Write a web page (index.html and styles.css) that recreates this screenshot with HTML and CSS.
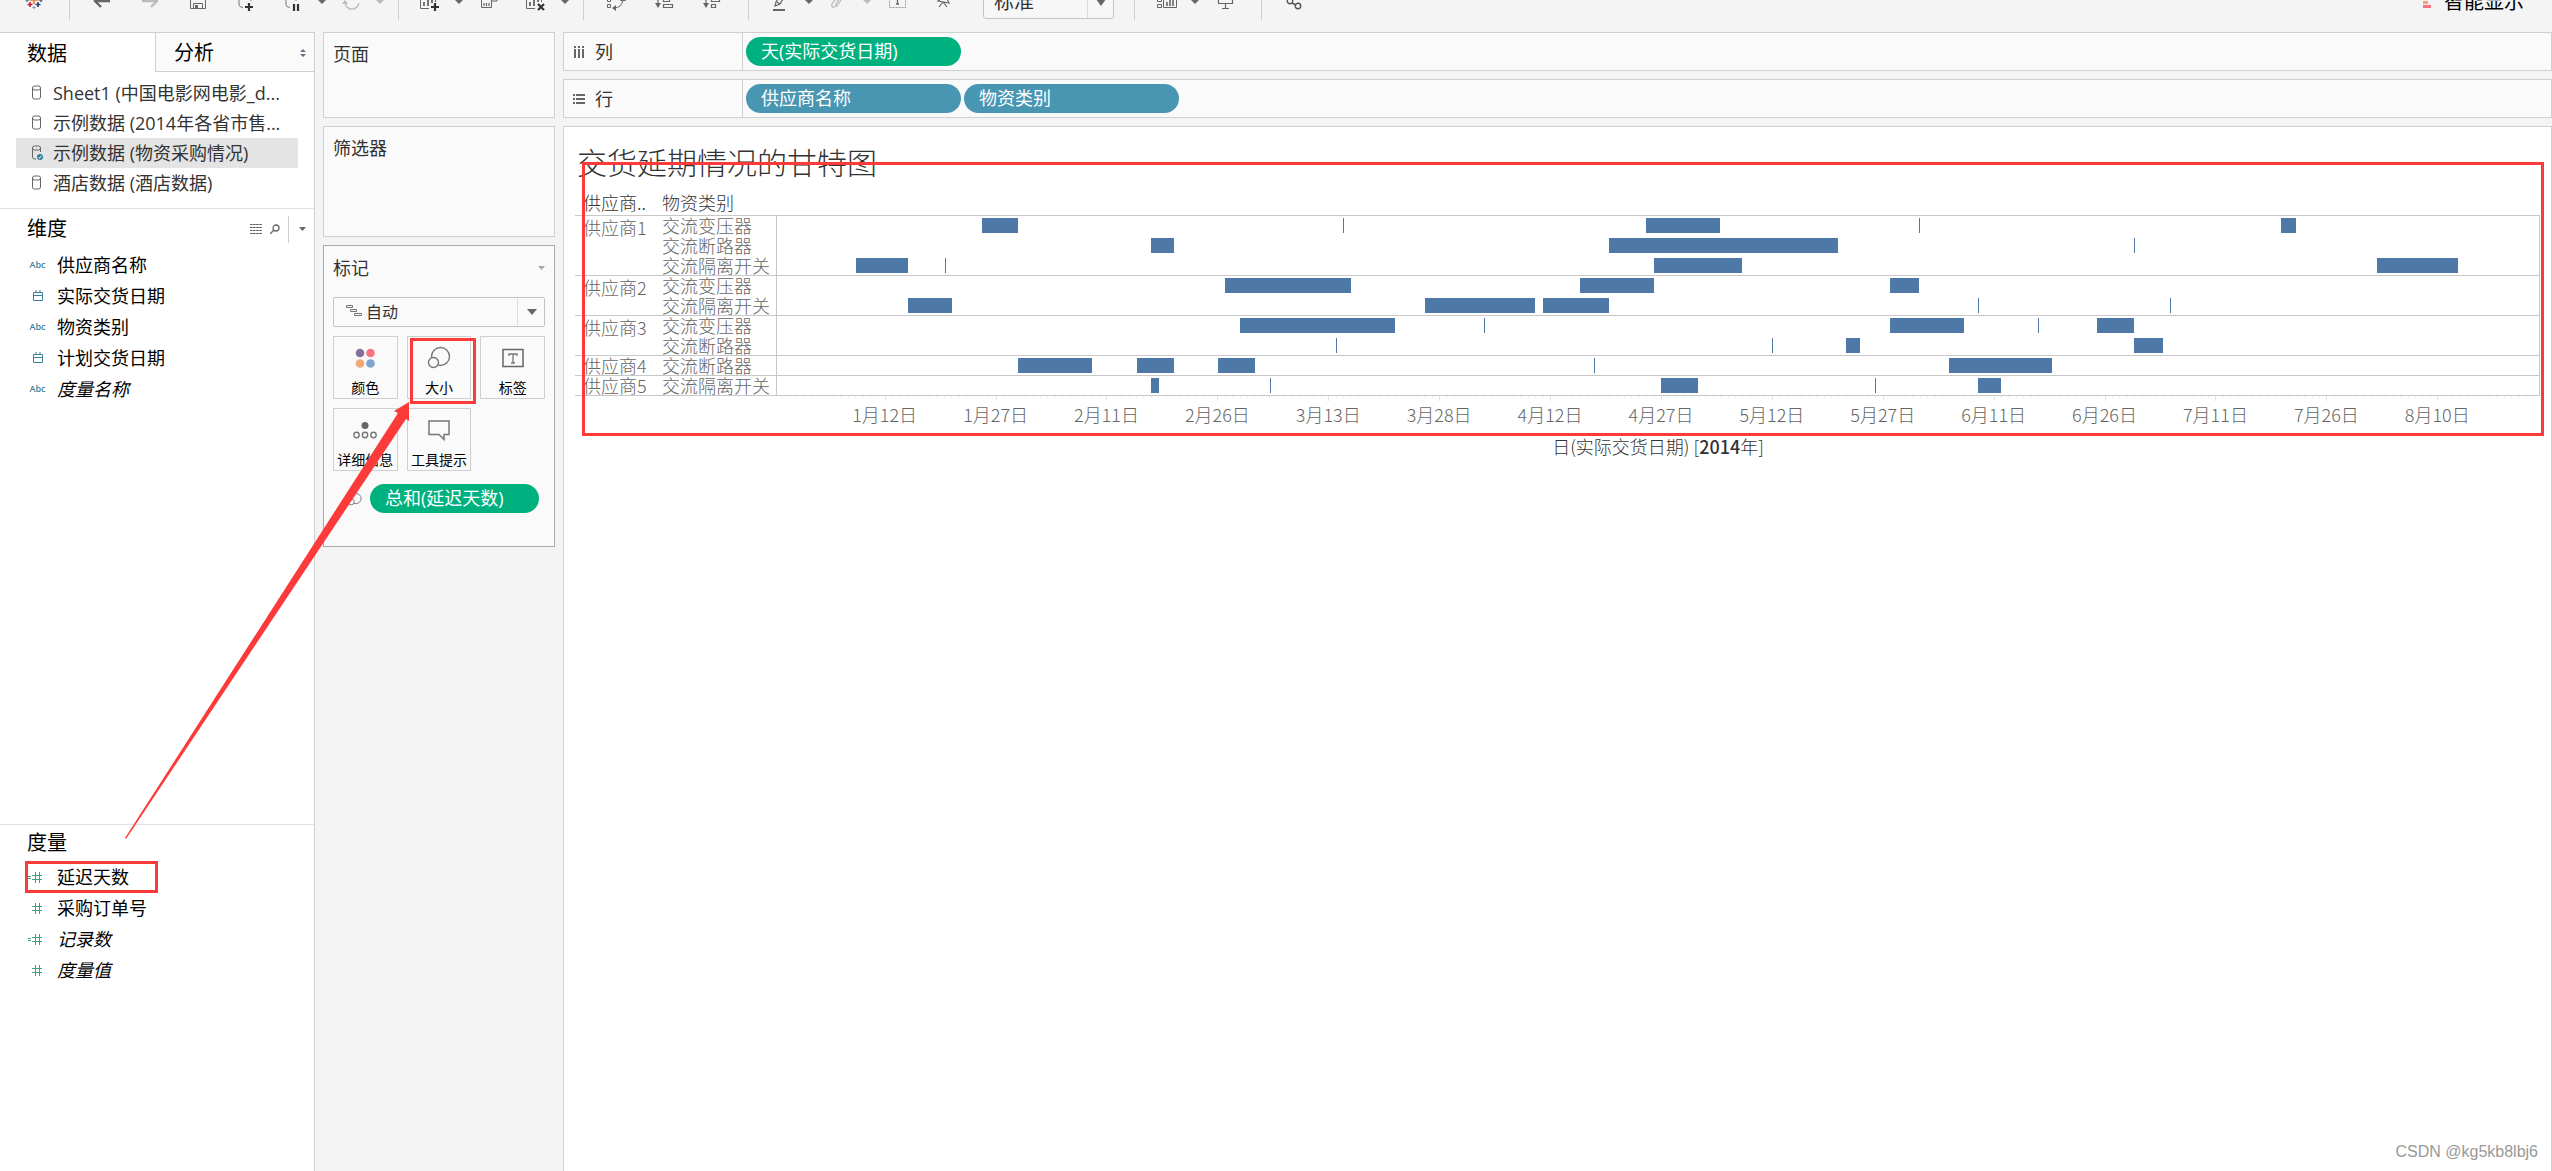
FILE: index.html
```html
<!DOCTYPE html>
<html lang="zh-CN">
<head>
<meta charset="utf-8">
<title>交货延期情况的甘特图</title>
<link rel="stylesheet" href="styles.css">
</head>
<body>
<header class="toolbar">
  <div class="toolbar-row">
    <div class="tool-group logo">
      <svg class="icon" viewBox="0 -10 24 24"><g fill="none" stroke-width="1.6"><path stroke="#eb7532" d="M12-5V4M7.500 0H16.500"/><path stroke="#c72035" d="M8 2V7M5.500 4.500H10.500"/><path stroke="#1f447e" d="M16 2V7M13.500 4.500H18.500"/><path stroke="#59879b" d="M5-2V2M3.500 0H7"/><path stroke="#5b6591" d="M19-2V2M17 0H20.500"/><path stroke="#7a8fc0" stroke-width="1" d="M12 6V9M10.500 7.500H13.500"/></g></svg>
    </div>
    <div class="tool-group">
      <button class="tool" aria-label="撤消"><svg class="icon" viewBox="0 -10 24 24"><path d="M20 1H6M11-5L5 1l6 6" fill="none" stroke="#666" stroke-width="2.400"/></svg></button>
      <button class="tool" aria-label="重做"><svg class="icon" viewBox="0 -10 24 24"><path d="M4 1H18M13-5l6 6-6 6" fill="none" stroke="#bbb" stroke-width="2.400"/></svg></button>
      <button class="tool" aria-label="保存"><svg class="icon" viewBox="0 -10 24 24"><path d="M4.500-6.500h15v15h-15zM7.500 8V3.500h9V8" fill="none" stroke="#666"/><path d="M9 5h3v3H9z" fill="#666"/></svg></button>
      <button class="tool" aria-label="新建数据源"><svg class="icon" viewBox="0 -10 24 24"><path d="M5-6V5q0 2 4 2.500M17-6V1" fill="none" stroke="#777"/><path d="M15 3v8M11 7h8" stroke="#333" stroke-width="2.200"/></svg></button>
      <button class="tool" aria-label="暂停自动更新"><svg class="icon" viewBox="0 -10 24 24"><path d="M4-6V5q0 2 4 2.500M14-6V1" fill="none" stroke="#777"/><path d="M12 4v7M16 4v7" stroke="#333" stroke-width="2.200"/></svg></button>
      <button class="drop" aria-label="更新选项"><svg viewBox="0 0 8 6"><path d="M0 1h8L4 5z" fill="#666"/></svg></button>
      <button class="tool" aria-label="刷新"><svg class="icon" viewBox="0 -10 24 24"><path d="M5 1a7 7 0 0 0 14 2M5 0a7 7 0 0 1 13-3" fill="none" stroke="#bbb" stroke-width="1.400"/><path d="M2 4l3-4 3 4z" fill="#bbb"/></svg></button>
      <button class="drop" aria-label="刷新选项"><svg viewBox="0 0 8 6"><path d="M0 1h8L4 5z" fill="#bbb"/></svg></button>
    </div>
    <div class="tool-group">
      <button class="tool" aria-label="新建工作表"><svg class="icon" viewBox="0 -10 24 24"><path d="M10 8.500H1.500v-15h15V2" fill="none" stroke="#666"/><path d="M5 2v4M9-2v8M13-4v7" stroke="#666" stroke-width="1.800"/><path d="M16 3v8M12 7h8" stroke="#333" stroke-width="2.200"/></svg></button>
      <button class="drop" aria-label="新建选项"><svg viewBox="0 0 8 6"><path d="M0 1h8L4 5z" fill="#666"/></svg></button>
      <button class="tool" aria-label="复制工作表"><svg class="icon" viewBox="0 -10 24 24"><path d="M4.500-1.500h10v9h-10zM8-2v-5h12v8h-5" fill="none" stroke="#666"/><path d="M7 3v3M9.500 3v3M12 3v3" stroke="#666" stroke-width="1.200"/></svg></button>
      <button class="tool" aria-label="清除工作表"><svg class="icon" viewBox="0 -10 24 24"><path d="M10 8.500H1.500v-15h15V2" fill="none" stroke="#666"/><path d="M5 2v4M9-2v8M13-4v6" stroke="#666" stroke-width="1.800"/><path d="M13 4l6 6M19 4l-6 6" stroke="#333" stroke-width="2.200"/></svg></button>
      <button class="drop" aria-label="清除选项"><svg viewBox="0 0 8 6"><path d="M0 1h8L4 5z" fill="#666"/></svg></button>
    </div>
    <div class="tool-group">
      <button class="tool" aria-label="交换行和列"><svg class="icon" viewBox="0 -10 24 24"><path d="M3.500-1.500h3v3h-3zM3.500 4.500h3v3h-3zM3.500-7.500h3v3h-3zM10 8q8 0 9-9" fill="none" stroke="#666"/><path d="M8 8l4-3v6zM16 1l3-4 3 4z" fill="#666"/></svg></button>
      <button class="tool" aria-label="升序排序"><svg class="icon" viewBox="0 -10 24 24"><path d="M6-7V5M11.500-2.500h6v4h-6zM11.500 4.500h9v3h-9z" fill="none" stroke="#666" stroke-width="1.200"/><path d="M3 3h6L6 8z" fill="#666"/></svg></button>
      <button class="tool" aria-label="降序排序"><svg class="icon" viewBox="0 -10 24 24"><path d="M6-7V5M11.500-2.500h8v4h-8zM11.500 4.500h4v3h-4z" fill="none" stroke="#666" stroke-width="1.200"/><path d="M3 3h6L6 8z" fill="#666"/></svg></button>
    </div>
    <div class="tool-group">
      <button class="tool" aria-label="突出显示"><svg class="icon" viewBox="0 -10 24 24"><path d="M6 6l1-4 6-10 4 2-6 10zM8 2l3 2" fill="none" stroke="#666" stroke-width="1.200"/><path d="M4 10h12" stroke="#666" stroke-width="2"/></svg></button>
      <button class="drop" aria-label="突出显示选项"><svg viewBox="0 0 8 6"><path d="M0 1h8L4 5z" fill="#666"/></svg></button>
      <button class="tool" aria-label="组成员"><svg class="icon" viewBox="0 -10 24 24"><path d="M15-6L9 4q-1 3 1 2l7-11M12-6L5 4q-1 4 3 3" fill="none" stroke="#bbb" stroke-width="1.300"/></svg></button>
      <button class="drop" aria-label="分组选项"><svg viewBox="0 0 8 6"><path d="M0 1h8L4 5z" fill="#bbb"/></svg></button>
      <button class="tool" aria-label="显示标记标签"><svg class="icon" viewBox="0 -10 24 24"><path d="M4.500-7.500h16v15h-16z" fill="none" stroke="#999" stroke-dasharray="2 1"/><path d="M9-4h7M12.500-4v8M11 4h3" fill="none" stroke="#666" stroke-width="1.300"/></svg></button>
      <button class="tool" aria-label="固定轴"><svg class="icon" viewBox="0 -10 24 24"><path d="M7-6l8 1M9-5l-1 4-3 2 11 2-2-4 1-4M6 7l4-5M10 2l4 5" fill="none" stroke="#666" stroke-width="1.200"/></svg></button>
      <div class="fit">
        <select class="fit-select" aria-label="适合"><option>标准</option></select>
        <svg class="fit-caret" viewBox="0 0 10 7"><path d="M0 0h10L5 7z" fill="#666"/></svg>
      </div>
    </div>
    <div class="tool-group">
      <button class="tool" aria-label="显示/隐藏卡"><svg class="icon" viewBox="0 -10 24 24"><path d="M2.500-1.500h4v3h-4zM2.500 4.500h4v3h-4zM8.500-7.500h13v15h-13z" fill="none" stroke="#666"/><path d="M12 2v4M15-1v7M18-3v9" stroke="#666" stroke-width="1.600"/></svg></button>
      <button class="drop" aria-label="卡选项"><svg viewBox="0 0 8 6"><path d="M0 1h8L4 5z" fill="#666"/></svg></button>
      <button class="tool" aria-label="演示模式"><svg class="icon" viewBox="0 -10 24 24"><path d="M5.500-7.500h14v11h-14zM12.500 4v4M9 8.500h7" fill="none" stroke="#666" stroke-width="1.200"/></svg></button>
    </div>
    <div class="tool-group">
      <button class="tool" aria-label="共享"><svg class="icon" viewBox="0 -10 24 24"><g fill="none" stroke="#555" stroke-width="1.400"><circle cx="8" cy="1" r="2.700"/><circle cx="16" cy="6" r="2.700"/><circle cx="16" cy="-5" r="2.700"/><path d="M10 3l4 2M10-1l4-3"/></g></svg></button>
    </div>
    <button class="show-me"><svg class="icon" viewBox="0 -10 24 24"><path d="M12 1h5v3h-5z" fill="#f1a778"/><path d="M12 5h8v3h-8z" fill="#f87382"/></svg>智能显示</button>
  </div>
</header>

<main class="workspace">
  <aside class="data-pane">
    <div class="tabs">
      <button class="tab tab-active">数据</button>
      <button class="tab">分析<svg class="updown" viewBox="0 0 6 8"><path d="M0 3l3-3 3 3zM0 5h6L3 8z" fill="#667080"/></svg></button>
    </div>
    <ul class="sources">
      <li class="source"><svg class="db" viewBox="0 0 12 16"><path d="M1.500 3v9q0 2 2 2h4q2 0 2-2V3q0-2-2-2h-4q-2 0-2 2q0 2 2 2h4q2 0 2-2" fill="none" stroke="#666"/></svg>Sheet1 (中国电影网电影_d...</li>
      <li class="source"><svg class="db" viewBox="0 0 12 16"><path d="M1.500 3v9q0 2 2 2h4q2 0 2-2V3q0-2-2-2h-4q-2 0-2 2q0 2 2 2h4q2 0 2-2" fill="none" stroke="#666"/></svg>示例数据 (2014年各省市售...</li>
      <li class="source source-active"><svg class="db" viewBox="0 0 12 16"><path d="M5 14H3.500q-2 0-2-2V3q0-2 2-2h4q2 0 2 2v4M1.500 3q0 2 2 2h4q2 0 2-2" fill="none" stroke="#666"/><circle cx="9" cy="12" r="3" fill="#2f7f9c"/><path d="M7.500 12l1 1.500 2-3" fill="none" stroke="#fff" stroke-width=".8"/></svg>示例数据 (物资采购情况)</li>
      <li class="source"><svg class="db" viewBox="0 0 12 16"><path d="M1.500 3v9q0 2 2 2h4q2 0 2-2V3q0-2-2-2h-4q-2 0-2 2q0 2 2 2h4q2 0 2-2" fill="none" stroke="#666"/></svg>酒店数据 (酒店数据)</li>
    </ul>
    <section class="fields">
      <div class="fields-head dims-head">
        <h2 class="heading">维度</h2>
        <button class="mini" aria-label="查看数据"><svg width="12" height="10" viewBox="0 0 12 10"><path d="M0 .5h12M0 3.500h12M0 6.500h12M0 9.500h12" stroke="#555" stroke-dasharray="2.500 .6"/></svg></button>
        <button class="mini" aria-label="查找字段"><svg width="10" height="10" viewBox="0 0 10 10"><circle cx="6" cy="4" r="3" fill="none" stroke="#666" stroke-width="1.300"/><path d="M4 6L0 10" stroke="#666" stroke-width="1.300"/></svg></button>
        <button class="mini mini-menu" aria-label="菜单"><svg width="7" height="4" viewBox="0 0 7 4"><path d="M0 0h7L3.500 4z" fill="#666"/></svg></button>
      </div>
      <ul class="field-list">
        <li class="field"><span class="abc">Abc</span>供应商名称</li>
        <li class="field"><span class="abc"><svg width="10" height="11" viewBox="0 0 10 11"><path d="M.5 2.500h9v8h-9zM.5 5.500h9M3 0v3M7 0v3" fill="none" stroke="#3d8097"/></svg></span>实际交货日期</li>
        <li class="field"><span class="abc">Abc</span>物资类别</li>
        <li class="field"><span class="abc"><svg width="10" height="11" viewBox="0 0 10 11"><path d="M.5 2.500h9v8h-9zM.5 5.500h9M3 0v3M7 0v3" fill="none" stroke="#3d8097"/></svg></span>计划交货日期</li>
        <li class="field field-italic"><span class="abc">Abc</span>度量名称</li>
      </ul>
    </section>
    <section class="fields">
      <div class="fields-head"><h2 class="heading">度量</h2></div>
      <ul class="field-list">
        <li class="field field-marked"><span class="abc"><svg width="20" height="12" viewBox="0 0 20 12"><path d="M0 5.500h3M0 7.500h3M4 4.500h10M4 8.500h10M7.500 1v11M11.500 1v11" stroke="#3fa37c"/></svg></span>延迟天数</li>
        <li class="field"><span class="abc"><svg width="20" height="12" viewBox="0 0 20 12"><path d="M4 4.500h10M4 8.500h10M7.500 1v11M11.500 1v11" stroke="#3fa37c"/></svg></span>采购订单号</li>
        <li class="field field-italic"><span class="abc"><svg width="20" height="12" viewBox="0 0 20 12"><path d="M0 5.500h3M0 7.500h3M4 4.500h10M4 8.500h10M7.500 1v11M11.500 1v11" stroke="#3fa37c"/></svg></span>记录数</li>
        <li class="field field-italic"><span class="abc"><svg width="20" height="12" viewBox="0 0 20 12"><path d="M4 4.500h10M4 8.500h10M7.500 1v11M11.500 1v11" stroke="#3fa37c"/></svg></span>度量值</li>
      </ul>
    </section>
  </aside>

  <div class="cards">
    <section class="card pages"><h3 class="card-title">页面</h3></section>
    <section class="card filters"><h3 class="card-title">筛选器</h3></section>
    <section class="card marks">
      <div class="marks-head"><h3 class="card-title">标记</h3><svg width="7" height="4" viewBox="0 0 7 4"><path d="M0 0h7L3.500 4z" fill="#aaa"/></svg></div>
      <div class="mark-type">
        <svg class="gantt-icon" viewBox="0 0 16 12"><path d="M.5 1.500h6v2h-6zM4.500 5.500h6v2h-6zM8.500 9.500h7v2h-7z" fill="none" stroke="#777"/></svg>
        <select class="mark-select" aria-label="标记类型"><option>自动</option></select>
        <svg class="mark-caret" viewBox="0 0 10 6"><path d="M0 0h10L5 6z" fill="#666"/></svg>
      </div>
      <div class="mark-grid">
        <button class="mark"><svg class="mark-icon" viewBox="0 0 24 24"><circle cx="7" cy="7" r="4.300" fill="#85709b"/><circle cx="17.500" cy="7" r="4.300" fill="#f87382"/><circle cx="7" cy="17.500" r="4.300" fill="#f1a778"/><circle cx="17.500" cy="17.500" r="4.300" fill="#7ea3cc"/></svg>颜色</button>
        <button class="mark mark-marked"><svg class="mark-icon" viewBox="0 0 24 24"><circle cx="13.500" cy="10.500" r="9" fill="none" stroke="#777" stroke-width="1.400"/><circle cx="6.500" cy="16.500" r="5" fill="#fafafa" stroke="#777" stroke-width="1.400"/></svg>大小</button>
        <button class="mark"><svg class="mark-icon" viewBox="0 0 24 24"><path d="M2 3.500h20v17H2z" fill="none" stroke="#666" stroke-width="1.500"/><path d="M8 10V8h8v2M12 8v9M10 17h4" fill="none" stroke="#777" stroke-width="1.300"/></svg>标签</button>
        <button class="mark"><svg class="mark-icon" viewBox="0 0 24 24"><circle cx="12" cy="7.500" r="3.500" fill="#666"/><g fill="none" stroke="#777" stroke-width="1.400"><circle cx="3.500" cy="17" r="2.700"/><circle cx="12" cy="17" r="2.700"/><circle cx="20.500" cy="17" r="2.700"/></g></svg>详细信息</button>
        <button class="mark"><svg class="mark-icon" viewBox="0 0 24 24"><path d="M2 3h20v13.500h-5v5l-5-5H2z" fill="none" stroke="#777" stroke-width="1.500"/></svg>工具提示</button>
      </div>
      <div class="encoding">
        <svg class="size-icon" viewBox="0 0 16 14"><circle cx="9.500" cy="6.500" r="5.500" fill="none" stroke="#777"/><circle cx="4.500" cy="10" r="3.200" fill="#fafafa" stroke="#777"/></svg>
        <span class="pill pill-green">总和(延迟天数)</span>
      </div>
    </section>
  </div>

  <div class="view">
    <div class="shelf">
      <div class="shelf-label"><svg class="shelf-icon" viewBox="0 0 12 12"><path d="M2 0v2M2 3v9M6 0v2M6 3v9M10 0v2M10 3v9" stroke="#666" stroke-width="2"/></svg>列</div>
      <span class="pill pill-green">天(实际交货日期)</span>
    </div>
    <div class="shelf">
      <div class="shelf-label"><svg class="shelf-icon" viewBox="0 0 12 12"><path d="M0 2h2M3 2h9M0 6h2M3 6h9M0 10h2M3 10h9" stroke="#666" stroke-width="2"/></svg>行</div>
      <span class="pill pill-blue">供应商名称</span>
      <span class="pill pill-blue">物资类别</span>
    </div>
    <section class="sheet">
      <h1 class="sheet-title">交货延期情况的甘特图</h1>
      <table class="gantt">
        <colgroup><col class="col-supplier"><col class="col-kind"><col></colgroup>
        <thead><tr><th>供应商..</th><th>物资类别</th><th></th></tr></thead>
        <tbody>
          <tr><th rowspan="3" class="last tall">供应商1</th><td>交流变压器</td><td class="plot" data-bars="13:5 62:0 103:10 140:0 189:2"></td></tr>
          <tr><td>交流断路器</td><td class="plot" data-bars="36:3 98:31 169:0"></td></tr>
          <tr><td class="last">交流隔离开关</td><td class="plot last" data-bars="-4:7 8:0 104:12 202:11"></td></tr>
          <tr><th rowspan="2" class="last tall">供应商2</th><td>交流变压器</td><td class="plot" data-bars="46:17 94:10 136:4"></td></tr>
          <tr><td class="last">交流隔离开关</td><td class="plot last" data-bars="3:6 73:15 89:9 148:0 174:0"></td></tr>
          <tr><th rowspan="2" class="last tall">供应商3</th><td>交流变压器</td><td class="plot" data-bars="48:21 81:0 136:10 156:0 164:5"></td></tr>
          <tr><td class="last">交流断路器</td><td class="plot last" data-bars="61:0 120:0 130:2 169:4"></td></tr>
          <tr><th class="last">供应商4</th><td class="last">交流断路器</td><td class="plot last" data-bars="18:10 34:5 45:5 96:0 144:14"></td></tr>
          <tr><th class="last">供应商5</th><td class="last">交流隔离开关</td><td class="plot last" data-bars="36:1 52:0 105:5 134:0 148:3"></td></tr>
        </tbody>
      </table>
      <div class="axis"></div>
      <p class="axis-title">日(实际交货日期) [<b>2014</b>年]</p>
      <div class="note-chart"></div>
    </section>
  </div>
</main>

<svg class="arrow" viewBox="0 0 420 850"><path d="M125 838L398 413 394 411 409 402 409 421 406 419 126 839z" fill="#fc3a39"/></svg>
<div class="watermark">CSDN @kg5kb8lbj6</div>
<script src="chart.js"></script>
</body>
</html>
```
FILE: chart.js
```js
// Days are counted from 12 January 2014.
const FIRST = -14.7, SPAN = 238.6;
const pct = day => ((day - FIRST) / SPAN * 100).toFixed(3) + '%';

document.querySelectorAll('.plot').forEach(cell => {
  cell.dataset.bars.split(' ').forEach(pair => {
    const [start, days] = pair.split(':').map(Number);
    const bar = document.createElement('span');
    bar.className = 'bar';
    bar.style.left = pct(start);
    bar.style.width = (days / SPAN * 100).toFixed(3) + '%';
    cell.append(bar);
  });
});

const axis = document.querySelector('.axis');
for (let d = -14; d < 224; d++) {
  const tick = document.createElement('i');
  tick.className = d % 15 === 0 && d >= 0 ? 'tick tick-major' : 'tick';
  tick.style.left = pct(d);
  axis.append(tick);
}
for (let d = 0; d <= 210; d += 15) {
  const date = new Date(2014, 0, 12 + d);
  const label = document.createElement('span');
  label.className = 'tick-label';
  label.style.left = pct(d);
  label.textContent = `${date.getMonth() + 1}月${date.getDate()}日`;
  axis.append(label);
}
```
FILE: styles.css
```css
*, *::after { box-sizing: border-box; margin: 0; padding: 0; }

body {
  display: flex;
  flex-direction: column;
  min-height: 100vh;
  position: relative;
  overflow: hidden;
  background: #f4f4f4;
  color: #333;
  font: 400 18px/24px "Open Sans", "Noto Sans CJK SC", sans-serif;
}
button, select { font: inherit; color: inherit; background: none; border: 0; }
ul { list-style: none; }
h1, h2, h3, th { font-weight: inherit; text-align: left; }

/* toolbar: upper half is scrolled out of the window */
.toolbar { height: 32px; overflow: hidden; }
.toolbar-row { display: flex; height: 36px; margin-top: -16px; }
.tool-group { display: flex; align-items: center; padding: 0 12px 0 8px; border-right: 1px solid #cfcfcf; }
.tool-group:nth-of-type(7) { border-right: 0; }
.logo { width: 70px; padding-left: 22px; }
.tool { display: flex; justify-content: center; width: 48px; }
.icon { width: 24px; height: 24px; }
.drop { display: flex; width: 10px; }
.drop svg { width: 8px; height: 6px; }
.fit { display: flex; align-items: center; position: relative; align-self: stretch; margin: 0 8px 0 14px; }
.fit-select { width: 131px; height: 34px; padding-left: 10px; font-size: 20px; appearance: none; border: 1px solid #c4c4c4; border-radius: 3px; background: linear-gradient(90deg, transparent 103px, #ddd 103px, #ddd 104px, transparent 104px) #f7f7f7; }
.fit-caret { position: absolute; right: 8px; width: 10px; height: 7px; }
.show-me { display: flex; align-items: center; gap: 9px; margin-left: auto; padding-right: 28px; font-size: 20px; color: #000; }

.workspace { flex: 1; display: flex; gap: 8px; }

/* data pane */
.data-pane { width: 315px; display: grid; grid-template-rows: auto auto 23fr 13fr; background: #fff; border: solid #cfcfcf; border-width: 1px 1px 0 0; color: #000; }
.tabs { display: flex; height: 39px; }
.tab { display: flex; align-items: center; justify-content: space-between; flex: 1; padding: 2px 8px 0 18px; font-size: 20px; background: #fafafa; border: solid #cfcfcf; border-width: 0 0 1px 1px; }
.tab-active { flex: 0 0 155px; padding-left: 27px; background: #fff; border: 0; }
.updown { width: 6px; height: 8px; }
.sources { padding: 6px 16px 10px; border-bottom: 1px solid #e2e2e2; color: #333; }
.source { display: flex; align-items: center; gap: 10px; height: 30px; padding-left: 15px; white-space: nowrap; }
.source-active { background: #e4e4e4; }
.db { width: 12px; height: 16px; }
.fields + .fields { border-top: 1px solid #e2e2e2; }
.fields-head { display: flex; align-items: center; height: 37px; padding-left: 27px; }
.dims-head { height: 40px; }
.heading { flex: 1; font-size: 20px; }
.mini { display: flex; align-items: center; height: 27px; margin-right: 8px; }
.mini-menu { margin-right: 0; padding: 0 8px 0 10px; border-left: 1px solid #cfcfcf; }
.field { display: flex; align-items: center; height: 31px; padding-left: 26px; position: relative; }
.field-italic { font-style: italic; }
.abc { display: flex; justify-content: center; width: 23px; margin-right: 8px; font: 600 9px/12px "Open Sans", sans-serif; color: #3d8097; }

/* cards */
.cards { width: 232px; display: flex; flex-direction: column; gap: 8px; }
.card { background: #fafafa; border: 1px solid #cfcfcf; padding: 9px; }
.card-title { font-size: 18px; line-height: 24px; }
.pages { height: 86px; }
.filters { height: 111px; }
.marks { height: 302px; padding-top: 10px; border-color: #aaa; display: flex; flex-direction: column; gap: 9px; }
.marks-head { display: flex; align-items: center; justify-content: space-between; height: 32px; padding-bottom: 8px; }
.mark-type { display: flex; align-items: center; position: relative; height: 30px; }
.mark-select { width: 100%; height: 30px; padding-left: 32px; font-size: 16px; appearance: none; border: 1px solid #c4c4c4; border-radius: 2px; background: linear-gradient(270deg, transparent 26px, #ddd 26px, #ddd 27px, transparent 27px); }
.gantt-icon { position: absolute; left: 13px; top: 7px; width: 16px; height: 12px; }
.mark-caret { position: absolute; right: 8px; width: 10px; height: 6px; }
.mark-grid { display: grid; grid-template-columns: repeat(3, 1fr); gap: 9px; }
.mark { display: flex; flex-direction: column; align-items: center; justify-content: space-between; height: 63px; padding: 9px 0 0; font-size: 14px; line-height: 20px; color: #000; white-space: nowrap; border: 1px solid #cfcfcf; position: relative; }
.mark-icon { width: 24px; height: 24px; }
.encoding { display: flex; align-items: center; gap: 8px; margin-top: 4px; padding-left: 14px; }
.size-icon { width: 15px; height: 14px; }

.pill { width: 215px; height: 29px; padding-left: 15px; border-radius: 15px; color: #fff; line-height: 29px; white-space: nowrap; }
.encoding .pill { width: 169px; }
.pill-green { background: #00b180; }
.pill-blue { background: #4996b2; }

/* view */
.view { flex: 1; min-width: 0; display: flex; flex-direction: column; gap: 8px; }
.shelf { display: flex; align-items: center; gap: 3px; height: 39px; background: #fafafa; border: 1px solid #cfcfcf; }
.shelf-label { display: flex; align-items: center; align-self: stretch; gap: 10px; width: 179px; padding-left: 9px; border-right: 1px solid #cfcfcf; }
.shelf-icon { width: 12px; height: 12px; }
.sheet { flex: 1; position: relative; padding: 14px 11px 0; background: #fff; border: 1px solid #cfcfcf; border-bottom: 0; font-family: "Noto Sans CJK SC", sans-serif; font-weight: 300; }
.sheet-title { padding-left: 2px; margin-bottom: 8px; font-size: 30px; line-height: 40px; }

.gantt { width: 100%; table-layout: fixed; border-collapse: separate; border-spacing: 0; color: #666; line-height: 18px; }
.col-supplier { width: 87px; }
.col-kind { width: 114px; }
.gantt th { padding-left: 8px; vertical-align: top; white-space: nowrap; }
.gantt thead th { height: 27px; padding-top: 2px; line-height: 22px; color: #333; border-bottom: 1px solid #c8c8c8; }
.gantt thead th + th { padding-left: 0; }
.gantt tbody th, .gantt tbody td { height: 20px; white-space: nowrap; vertical-align: top; }
.gantt tbody .tall { padding-top: 2px; }
.gantt tbody .last { border-bottom: 1px solid #c8c8c8; }
.gantt tbody .plot { position: relative; border-left: 1px solid #c8c8c8; border-right: 1px solid #c8c8c8; }
.bar { position: absolute; top: 2px; height: 15px; min-width: 1px; background: #4e79a7; }

.axis { position: relative; height: 36px; margin-left: 201px; color: #666; }
.tick { position: absolute; top: 0; width: 1px; height: 2px; background: #ececec; }
.tick-major { height: 5px; background: #e4e4e4; }
.tick-label { position: absolute; top: 6px; transform: translateX(-50%); white-space: nowrap; }
.axis-title { margin-left: 201px; text-align: center; line-height: 28px; }
.axis-title b { font-weight: 500; }

/* annotations */
.note-chart, .field-marked::after, .mark-marked::after { position: absolute; border: 3px solid #fc3a39; pointer-events: none; }
.note-chart { left: 18px; right: 7px; top: 35px; height: 274px; }
.field-marked::after { content: ""; left: 25px; top: -1px; width: 133px; height: 32px; }
.mark-marked::after { content: ""; left: 2px; top: 1px; width: 66px; height: 66px; }
.arrow { position: absolute; left: 0; top: 0; width: 420px; height: 850px; pointer-events: none; }
.watermark { position: absolute; right: 14px; bottom: 9px; font: 16px/20px "Liberation Sans", sans-serif; color: #999; }
```
